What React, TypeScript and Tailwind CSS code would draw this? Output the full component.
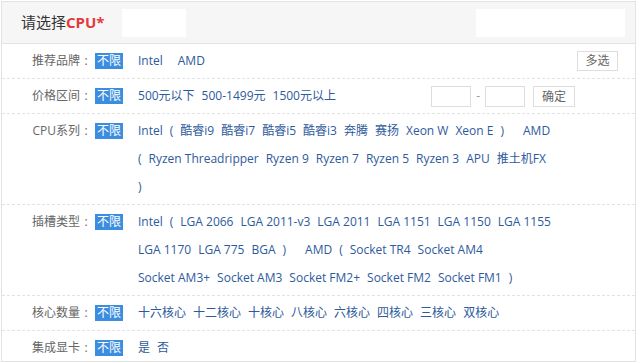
import React from "react";

const FONT = { fontFamily: '"Open Sans", "Noto Sans CJK SC", sans-serif' };

function Badge() {
  return (
    <div className="flex h-[28px] items-center">
      <span className="bg-[#3b8de0] px-[2px] text-[12px] leading-[16px] text-white">不限</span>
    </div>
  );
}

// "|AMD" marks an item that follows a closing paren and sits a bit further out
function Values({ lines, gap = "gap-x-[7px]" }: { lines: string[][]; gap?: string }) {
  return (
    <div className="ml-[15px] flex flex-col">
      {lines.map((line, i) => (
        <div key={i} className={`flex h-[28px] items-center whitespace-nowrap ${gap}`}>
          {line.map((item, j) =>
            item.startsWith("|") ? (
              <span key={j} className="ml-[12px] text-[#2e5a9c]">
                {item.slice(1)}
              </span>
            ) : (
              <span key={j} className="text-[#2e5a9c]">
                {item}
              </span>
            )
          )}
        </div>
      ))}
    </div>
  );
}

function Row({
  label,
  children,
  last,
}: {
  label: string;
  children: React.ReactNode;
  last?: boolean;
}) {
  return (
    <div
      className={`flex items-start py-[3px] ${
        last ? "" : "border-b border-dashed border-[#e3e3e3]"
      }`}
    >
      <div className="flex w-[90px] shrink-0 justify-end leading-[28px] text-[#666]">
        <span>{label}</span>
        <span className="inline-block w-[12px] text-center">:</span>
      </div>
      <div className="ml-[3px]">
        <Badge />
      </div>
      {children}
    </div>
  );
}

export default function App() {
  return (
    <div className="h-[363px] w-[640px] bg-white p-px text-[12px]" style={FONT}>
      <div className="flex h-[361px] w-[635px] flex-col overflow-hidden border border-[#e3e3e3]">
        {/* header */}
        <div className="flex h-[42px] shrink-0 items-center border-b border-[#e3e3e3] bg-[#f6f6f6] pl-[19px]">
          <div className="w-[85px] whitespace-nowrap">
            <span className="text-[15px] text-[#333]">请选择</span>
            <span className="text-[15px] font-bold text-[#e4393c]">CPU*</span>
          </div>
          <div className="ml-[16px] h-[28px] w-[64px] bg-white" />
          <div className="flex-1" />
          <div className="mr-[10px] h-[28px] w-[149px] bg-white" />
        </div>

        <Row label="推荐品牌">
          <Values lines={[["Intel", "AMD"]]} gap="gap-x-[15px]" />
          <div className="flex-1" />
          <div className="mr-[17px] flex h-[28px] items-center">
            <button className="h-[20px] w-[41px] border border-[#ddd] bg-white text-[12px] leading-[18px] text-[#666]">
              多选
            </button>
          </div>
        </Row>

        <Row label="价格区间">
          <Values lines={[["500元以下", "500-1499元", "1500元以上"]]} />
          <div className="flex-1" />
          <div className="mr-[60px] flex h-[28px] items-center">
            <div className="h-[21px] w-[40px] border border-[#ddd] bg-white" />
            <span className="mx-[5px] text-[#999]">-</span>
            <div className="h-[21px] w-[40px] border border-[#ddd] bg-white" />
            <button className="ml-[8px] h-[21px] w-[42px] border border-[#ddd] bg-white text-[12px] leading-[19px] text-[#666]">
              确定
            </button>
          </div>
        </Row>

        <Row label="CPU系列">
          <Values
            lines={[
              ["Intel", "(", "酷睿i9", "酷睿i7", "酷睿i5", "酷睿i3", "奔腾", "赛扬", "Xeon W", "Xeon E", ")", "|AMD"],
              ["(", "Ryzen Threadripper", "Ryzen 9", "Ryzen 7", "Ryzen 5", "Ryzen 3", "APU", "推土机FX"],
              [")"],
            ]}
          />
        </Row>

        <Row label="插槽类型">
          <Values
            lines={[
              ["Intel", "(", "LGA 2066", "LGA 2011-v3", "LGA 2011", "LGA 1151", "LGA 1150", "LGA 1155"],
              ["LGA 1170", "LGA 775", "BGA", ")", "|AMD", "(", "Socket TR4", "Socket AM4"],
              ["Socket AM3+", "Socket AM3", "Socket FM2+", "Socket FM2", "Socket FM1", ")"],
            ]}
          />
        </Row>

        <Row label="核心数量">
          <Values
            lines={[["十六核心", "十二核心", "十核心", "八核心", "六核心", "四核心", "三核心", "双核心"]]}
          />
        </Row>

        <Row label="集成显卡" last>
          <Values lines={[["是", "否"]]} />
        </Row>
      </div>
    </div>
  );
}
